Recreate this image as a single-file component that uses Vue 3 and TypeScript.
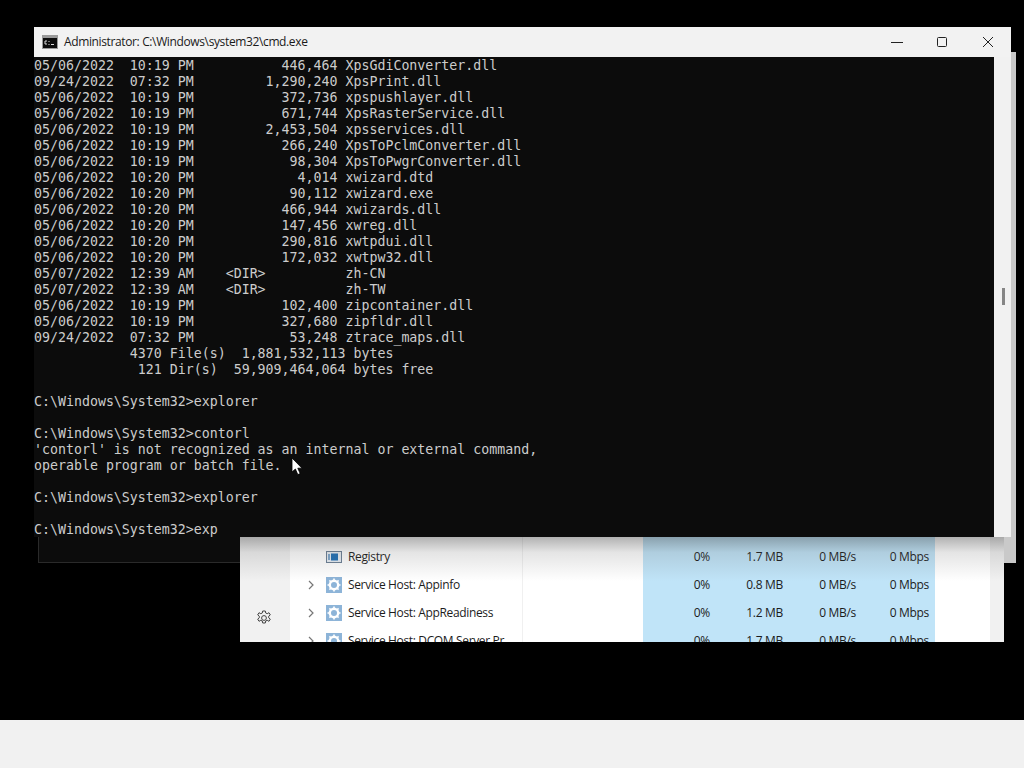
<script setup lang="ts">
const lines: string[] = [
  '05/06/2022  10:19 PM           446,464 XpsGdiConverter.dll',
  '09/24/2022  07:32 PM         1,290,240 XpsPrint.dll',
  '05/06/2022  10:19 PM           372,736 xpspushlayer.dll',
  '05/06/2022  10:19 PM           671,744 XpsRasterService.dll',
  '05/06/2022  10:19 PM         2,453,504 xpsservices.dll',
  '05/06/2022  10:19 PM           266,240 XpsToPclmConverter.dll',
  '05/06/2022  10:19 PM            98,304 XpsToPwgrConverter.dll',
  '05/06/2022  10:20 PM             4,014 xwizard.dtd',
  '05/06/2022  10:20 PM            90,112 xwizard.exe',
  '05/06/2022  10:20 PM           466,944 xwizards.dll',
  '05/06/2022  10:20 PM           147,456 xwreg.dll',
  '05/06/2022  10:20 PM           290,816 xwtpdui.dll',
  '05/06/2022  10:20 PM           172,032 xwtpw32.dll',
  '05/07/2022  12:39 AM    <DIR>          zh-CN',
  '05/07/2022  12:39 AM    <DIR>          zh-TW',
  '05/06/2022  10:19 PM           102,400 zipcontainer.dll',
  '05/06/2022  10:19 PM           327,680 zipfldr.dll',
  '09/24/2022  07:32 PM            53,248 ztrace_maps.dll',
  '            4370 File(s)  1,881,532,113 bytes',
  '             121 Dir(s)  59,909,464,064 bytes free',
  '',
  'C:\\Windows\\System32>explorer',
  '',
  'C:\\Windows\\System32>contorl',
  "'contorl' is not recognized as an internal or external command,",
  'operable program or batch file.',
  '',
  'C:\\Windows\\System32>explorer',
  '',
  'C:\\Windows\\System32>exp',
]

interface Proc { name: string; kind: 'reg' | 'svc'; mem: string }
const procs: Proc[] = [
  { name: 'Registry', kind: 'reg', mem: '1.7 MB' },
  { name: 'Service Host: Appinfo', kind: 'svc', mem: '0.8 MB' },
  { name: 'Service Host: AppReadiness', kind: 'svc', mem: '1.2 MB' },
  { name: 'Service Host: DCOM Server Pr', kind: 'svc', mem: '1.7 MB' },
]
</script>

<template>
  <div class="desktop">
    <div class="ghost"></div>
    <div class="back-strip"></div>

    <section class="taskmgr">
      <aside class="side">
        <svg class="gear" width="16" height="16" viewBox="0 0 16 16" fill="none" stroke="#444" stroke-width="1">
          <circle cx="8" cy="8" r="2.4" />
          <path d="M6.7 1h2.6l.4 2 1.5.7 1.8-1 1.3 2.2-1.6 1.3v1.6l1.6 1.3-1.3 2.2-1.8-1-1.5.7-.4 2H6.7l-.4-2-1.5-.7-1.8 1-1.3-2.2 1.6-1.3V6.2L1.7 4.9 3 2.7l1.8 1 1.5-.7z" />
        </svg>
      </aside>
      <div class="table">
        <div v-for="p in procs" :key="p.name" class="row">
          <div class="name">
            <svg v-if="p.kind === 'svc'" class="chev" width="8" height="10" viewBox="0 0 8 10" fill="none" stroke="#777" stroke-width="1.2">
              <path d="M2 1l4 4-4 4" />
            </svg>
            <span v-else class="chev-space"></span>
            <svg v-if="p.kind === 'reg'" class="icon" width="16" height="16" viewBox="0 0 16 16">
              <rect x="0.5" y="2.5" width="15" height="11" fill="#e8eef4" stroke="#6b7f95" />
              <rect x="5" y="4.5" width="7" height="7" fill="#1f6fb5" />
              <rect x="2" y="5" width="2" height="6" fill="#7fa7cc" />
            </svg>
            <svg v-else class="icon" width="16" height="16" viewBox="0 0 16 16">
              <rect width="16" height="16" fill="#8db4d8" />
              <circle cx="8" cy="8" r="4.2" fill="none" stroke="#fff" stroke-width="2.4" />
              <path d="M8 1.5v2M8 12.5v2M1.5 8h2M12.5 8h2M3.4 3.4l1.4 1.4M11.2 11.2l1.4 1.4M3.4 12.6l1.4-1.4M11.2 4.8l1.4-1.4" stroke="#fff" stroke-width="1.6" />
            </svg>
            <span class="pname">{{ p.name }}</span>
          </div>
          <div class="status"></div>
          <div class="metrics">
            <span>0%</span>
            <span>{{ p.mem }}</span>
            <span>0 MB/s</span>
            <span>0 Mbps</span>
          </div>
          <div class="tail"></div>
          <div class="tm-scroll"></div>
        </div>
      </div>
      <div class="tm-shade"></div>
    </section>

    <section class="cmd">
      <header class="titlebar">
        <svg class="cmd-icon" width="16" height="14" viewBox="0 0 16 14">
          <rect width="16" height="14" fill="#9a9a9a" />
          <rect x="1" y="3" width="14" height="10" fill="#0c0c0c" />
          <path d="M3 6h2M3 6v3M3 9h2M7 6v1M7 9v1M9 9.5h3" stroke="#ddd" stroke-width="1" fill="none" />
        </svg>
        <span class="title">Administrator: C:\Windows\system32\cmd.exe</span>
        <div class="controls">
          <svg width="12" height="12" viewBox="0 0 12 12" class="ctl min"><path d="M0 6.5h12" stroke="#222" stroke-width="1" /></svg>
          <svg width="12" height="12" viewBox="0 0 12 12" class="ctl max"><rect x="1.5" y="1.5" width="9" height="9" rx="1" fill="none" stroke="#222" stroke-width="1" /></svg>
          <svg width="12" height="12" viewBox="0 0 12 12" class="ctl close"><path d="M1 1l10 10M11 1L1 11" stroke="#222" stroke-width="1" /></svg>
        </div>
      </header>
      <div class="body">
        <pre class="console"><template v-for="(l, i) in lines" :key="i">{{ l }}
</template></pre>
        <div class="scrollbar"><div class="thumb"></div></div>
      </div>
    </section>

    <svg class="cursor" width="13" height="19" viewBox="0 0 13 19">
      <path d="M1 1v14l3.4-3 2.4 5.6 2.4-1-2.4-5.4H11z" fill="#fff" stroke="#000" stroke-width="0.8" />
    </svg>

    <footer class="bottom"></footer>
  </div>
</template>

<style>
html, body { margin: 0; background: #000; }
</style>

<style scoped>
.desktop {
  position: relative;
  width: 1024px;
  height: 768px;
  background: #000;
  overflow: hidden;
}
.ghost {
  position: absolute;
  left: 38px;
  top: 530px;
  width: 220px;
  height: 33px;
  background: #0c0c0c;
  border: 1px solid #2a2a2a;
  box-sizing: border-box;
}
.back-strip {
  position: absolute;
  left: 1000px;
  top: 52px;
  width: 16px;
  height: 511px;
  background: #c9c9c9;
}
.taskmgr {
  position: absolute;
  left: 240px;
  top: 537px;
  width: 764px;
  height: 105px;
  display: flex;
  overflow: hidden;
  background: #fff;
  font-family: "Open Sans", "Noto Sans", sans-serif;
  font-size: 12px;
  color: #1c1c1c;
}
.side {
  width: 50px;
  flex: none;
  background: #f1f1f1;
  position: relative;
}
.gear {
  position: absolute;
  left: 16px;
  top: 73px;
}
.table { flex: 1; min-width: 0; }
.row {
  display: flex;
  height: 28px;
  align-items: stretch;
  line-height: 28px;
  white-space: nowrap;
}
.row:first-child { height: 34px; }
.row:first-child .name,
.row:first-child .metrics { padding-top: 6px; }
.name {
  width: 233px;
  flex: none;
  display: flex;
  align-items: center;
  box-sizing: border-box;
  padding-left: 17px;
  border-right: 1px solid #f0f0f0;
  overflow: hidden;
}
.chev { flex: none; margin-right: 11px; }
.chev-space { width: 8px; flex: none; margin-right: 11px; }
.icon { flex: none; margin-right: 6px; }
.pname { letter-spacing: -0.35px; }
.status { width: 120px; flex: none; }
.metrics {
  width: 292px;
  flex: none;
  background: #c0e4f8;
  display: grid;
  grid-template-columns: 67px 73px 73px 73px;
  align-content: start;
  box-sizing: border-box;
  padding-right: 6px;
  text-align: right;
  letter-spacing: -0.3px;
}
.tail { width: 55px; flex: none; }
.tm-scroll { width: 14px; flex: none; background: #f1f1f1; }
.tm-shade {
  position: absolute;
  left: 0;
  right: 0;
  top: 0;
  height: 44px;
  background: linear-gradient(to bottom, rgba(40, 40, 40, 0.36), rgba(90, 90, 90, 0.16) 35%, rgba(255, 255, 255, 0));
  pointer-events: none;
}
.cmd {
  position: absolute;
  left: 34px;
  top: 27px;
  width: 977px;
  height: 510px;
  display: flex;
  flex-direction: column;
  background: #0c0c0c;
}
.titlebar {
  height: 30px;
  flex: none;
  background: #f2f2f2;
  display: flex;
  align-items: center;
  padding-left: 8px;
  font-family: "Open Sans", "Noto Sans", sans-serif;
  font-size: 12px;
  color: #1a1a1a;
  box-sizing: border-box;
  padding-bottom: 1px;
}
.cmd-icon { flex: none; margin-right: 6px; }
.title { letter-spacing: -0.37px; white-space: nowrap; }
.controls {
  margin-left: auto;
  display: flex;
  align-items: center;
}
.ctl { display: block; flex: none; }
.min { margin-right: 33px; }
.max { margin-right: 34px; }
.close { margin-right: 17px; }
.body {
  flex: 1;
  display: flex;
  min-height: 0;
}
.console {
  flex: 1;
  margin: 0;
  padding-top: 1px;
  font-family: "DejaVu Sans Mono", "Liberation Mono", monospace;
  font-size: 13.28px;
  line-height: 16px;
  color: #cccccc;
  overflow: hidden;
}
.scrollbar {
  width: 17px;
  flex: none;
  background: #f1f1f1;
  display: flex;
  justify-content: center;
  align-items: flex-start;
}
.thumb {
  width: 3px;
  height: 17px;
  margin-top: 231px;
  margin-left: 1px;
  background: #858585;
}
.cursor {
  position: absolute;
  left: 291px;
  top: 457px;
}
.bottom {
  position: absolute;
  left: 0;
  right: 0;
  top: 720px;
  height: 48px;
  background: #f1f1f1;
}
</style>
